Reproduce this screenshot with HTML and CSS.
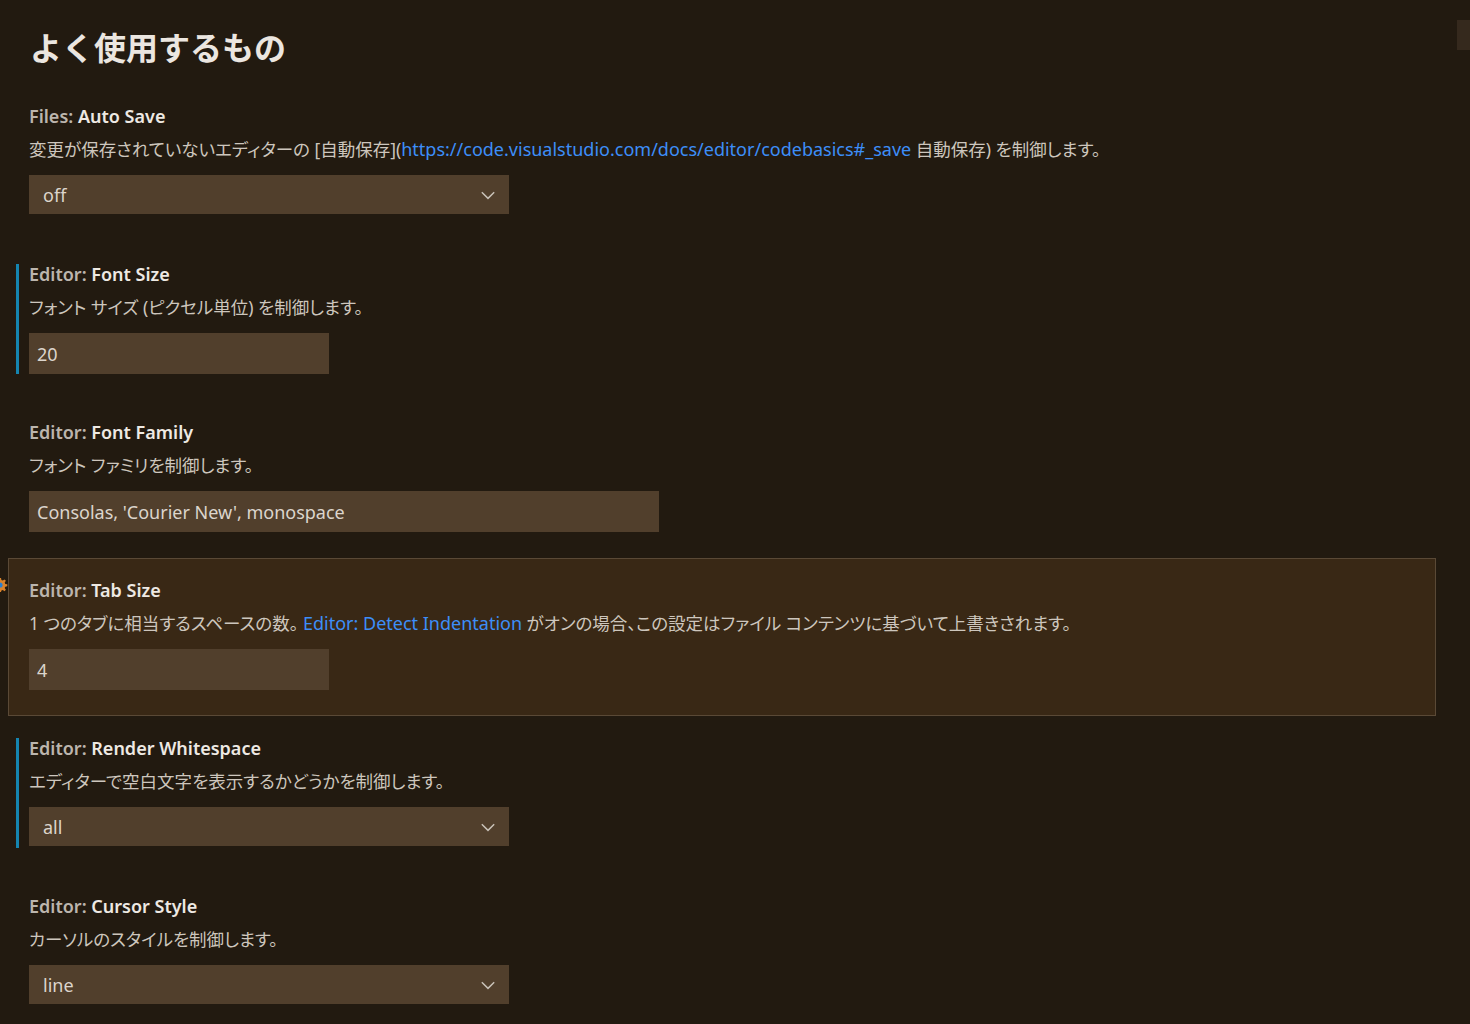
FILE: index.html
```html
<!DOCTYPE html>
<html lang="ja">
<head>
<meta charset="utf-8">
<title>Settings</title>
<link rel="stylesheet" href="styles.css">
</head>
<body>
<div class="page">
  <h1 class="heading">よく使用するもの</h1>

  <div class="row">
    <div class="title"><span class="cat">Files: </span><span class="name">Auto Save</span></div>
    <div class="desc">変更が保存されていないエディターの [自動保存](<span class="link">https://code.visualstudio.com/docs/editor/codebasics#_save</span> 自動保存) を制御します。</div>
    <div class="select w480"><span>off</span><svg class="chev" viewBox="0 0 16 16"><path d="M2.5 5.5 8 11l5.5-5.5" fill="none" stroke="#c9c2b8" stroke-width="1.3"/></svg></div>
  </div>

  <div class="row modified">
    <div class="title"><span class="cat">Editor: </span><span class="name">Font Size</span></div>
    <div class="desc">フォント サイズ (ピクセル単位) を制御します。</div>
    <div class="input w300">20</div>
  </div>

  <div class="row">
    <div class="title"><span class="cat">Editor: </span><span class="name">Font Family</span></div>
    <div class="desc">フォント ファミリを制御します。</div>
    <div class="input w630">Consolas, 'Courier New', monospace</div>
  </div>

  <div class="row focused">
    <svg class="gear" viewBox="0 0 16 16"><path d="M7 1h2l.4 2 1.4.6 1.7-1.2 1.4 1.4-1.2 1.7.6 1.4 2 .4v2l-2 .4-.6 1.4 1.2 1.7-1.4 1.4-1.7-1.2-1.4.6L9 15H7l-.4-2-1.4-.6-1.7 1.2-1.4-1.4 1.2-1.7L2.7 9.4.7 9V7l2-.4.6-1.4-1.2-1.7 1.4-1.4 1.7 1.2 1.4-.6z" fill="#d9822b"/><circle cx="8" cy="8" r="2.6" fill="#2a7fd0"/></svg>
    <div class="title"><span class="cat">Editor: </span><span class="name">Tab Size</span></div>
    <div class="desc">1 つのタブに相当するスペースの数。 <span class="link">Editor: Detect Indentation</span> がオンの場合、この設定はファイル コンテンツに基づいて上書きされます。</div>
    <div class="input w300">4</div>
  </div>

  <div class="row modified">
    <div class="title"><span class="cat">Editor: </span><span class="name">Render Whitespace</span></div>
    <div class="desc">エディターで空白文字を表示するかどうかを制御します。</div>
    <div class="select w480"><span>all</span><svg class="chev" viewBox="0 0 16 16"><path d="M2.5 5.5 8 11l5.5-5.5" fill="none" stroke="#c9c2b8" stroke-width="1.3"/></svg></div>
  </div>

  <div class="row">
    <div class="title"><span class="cat">Editor: </span><span class="name">Cursor Style</span></div>
    <div class="desc">カーソルのスタイルを制御します。</div>
    <div class="select w480"><span>line</span><svg class="chev" viewBox="0 0 16 16"><path d="M2.5 5.5 8 11l5.5-5.5" fill="none" stroke="#c9c2b8" stroke-width="1.3"/></svg></div>
  </div>
</div>
<div class="scroll-thumb"></div>
</body>
</html>
```

FILE: styles.css
```css
html, body {
  margin: 0;
  padding: 0;
  background: #221a10;
  height: 100%;
  overflow: hidden;
}
body {
  font-family: "Noto Sans", "Noto Sans CJK JP", sans-serif;
  color: #cdc6bd;
}
.page {
  display: flex;
  flex-direction: column;
  padding-top: 24px;
}
.heading {
  margin: -2px 0 0 30px;
  height: 62px;
  font-family: "Noto Sans CJK JP", sans-serif;
  font-size: 32px;
  font-weight: 700;
  line-height: 48px;
  color: #ebe6e0;
}
.row {
  position: relative;
  margin-left: 8px;
  width: 1428px;
  height: 158px;
  box-sizing: border-box;
  padding: 19px 0 0 20px;
  border: 1px solid transparent;
  display: flex;
  flex-direction: column;
  align-items: flex-start;
}
.row.focused {
  background: #392815;
  border-color: #5a4936;
}
.row.modified::before {
  content: "";
  position: absolute;
  left: 7px;
  top: 21px;
  width: 3px;
  height: 110px;
  background: #1585b0;
}
.title {
  font-size: 18px;
  font-weight: 600;
  line-height: 24px;
  height: 24px;
}
.cat { color: #bcb5ad; }
.name { color: #eee9e3; }
.desc {
  margin-top: 7px;
  font-size: 17.5px;
  font-feature-settings: "palt";
  line-height: 28px;
  height: 28px;
  white-space: nowrap;
}
.link {
  color: #3d8ef8;
  font-size: 18px;
}
.input, .select {
  margin-top: 12px;
  background: #513f2c;
  color: #dcd5cc;
  font-size: 18px;
  box-sizing: border-box;
  display: flex;
  align-items: center;
}
.input {
  height: 41px;
  padding-left: 8px;
}
.select {
  height: 39px;
  padding: 0 12px 0 14px;
  justify-content: space-between;
}
.w300 { width: 300px; }
.w480 { width: 480px; }
.w630 { width: 630px; }
.chev {
  width: 18px;
  height: 18px;
}
.gear {
  position: absolute;
  left: -17px;
  top: 18px;
  width: 16px;
  height: 16px;
}
.scroll-thumb {
  position: absolute;
  right: 0;
  top: 20px;
  width: 13px;
  height: 30px;
  background: #35291d;
}
```
